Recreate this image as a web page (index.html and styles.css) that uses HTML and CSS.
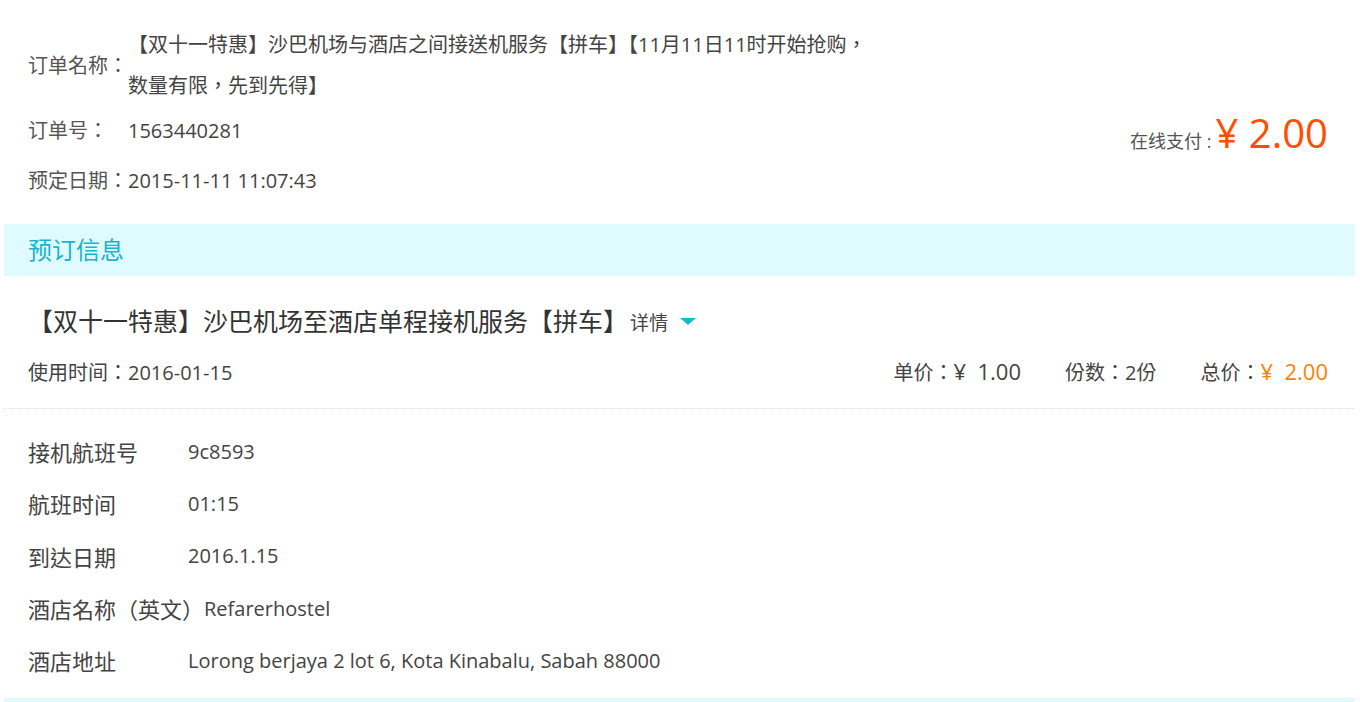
FILE: index.html
```html
<!DOCTYPE html>
<html lang="zh-TW">
<head>
    <meta charset="UTF-8">
    <meta name="viewport" content="width=device-width, initial-scale=1.0">
    <title>订单详情</title>
    <link rel="stylesheet" href="styles.css">
</head>
<body>
    <div class="order-page">
        <div class="order-info">
            <div class="order-fields">
                <div class="order-row order-name">
                    <span class="order-label">订单名称：</span>
                    <span class="order-value">【双十一特惠】沙巴机场与酒店之间接送机服务【拼车】【11月11日11时开始抢购，数量有限，先到先得】</span>
                </div>
                <div class="order-row">
                    <span class="order-label">订单号：</span>
                    <span class="order-value">1563440281</span>
                </div>
                <div class="order-row">
                    <span class="order-label">预定日期：</span>
                    <span class="order-value">2015-11-11 11:07:43</span>
                </div>
            </div>
            <div class="order-pay">
                <span class="pay-label">在线支付 :</span>
                <span class="pay-amount">¥ 2.00</span>
            </div>
        </div>

        <h2 class="section-title">预订信息</h2>

        <div class="product">
            <div class="product-head">
                <h3 class="product-name">【双十一特惠】沙巴机场至酒店单程接机服务【拼车】</h3>
                <a class="product-more" href="#">详情<span class="arrow-down"></span></a>
            </div>
            <div class="product-meta">
                <span class="use-date">使用时间：2016-01-15</span>
                <div class="product-prices">
                    <span class="price-item">单价：<span class="price-num">¥&nbsp; 1.00</span></span>
                    <span class="price-item">份数：2份</span>
                    <span class="price-item">总价：<span class="price-num price-total">¥&nbsp; 2.00</span></span>
                </div>
            </div>
        </div>

        <div class="details">
            <div class="detail-row">
                <span class="detail-label">接机航班号</span>
                <span class="detail-value">9c8593</span>
            </div>
            <div class="detail-row">
                <span class="detail-label">航班时间</span>
                <span class="detail-value">01:15</span>
            </div>
            <div class="detail-row">
                <span class="detail-label">到达日期</span>
                <span class="detail-value">2016.1.15</span>
            </div>
            <div class="detail-row">
                <span class="detail-label">酒店名称（英文）</span>
                <span class="detail-value">Refarerhostel</span>
            </div>
            <div class="detail-row">
                <span class="detail-label">酒店地址</span>
                <span class="detail-value">Lorong berjaya 2 lot 6, Kota Kinabalu, Sabah 88000</span>
            </div>
        </div>

        <div class="bottom-bar"></div>
    </div>
</body>
</html>
```

FILE: styles.css
```css
body {
    margin: 0;
    padding: 0;
    font-family: "Open Sans", "Noto Sans CJK TC", "Noto Sans CJK SC", sans-serif;
    color: #444;
    background: #fff;
}

.order-page {
    padding: 0 5px 0 4px;
}

.order-info {
    display: flex;
    justify-content: space-between;
    padding: 24px 27px 0 24px;
}

.order-row {
    display: flex;
    font-size: 20px;
    line-height: 50px;
}

.order-name {
    line-height: 41px;
}

.order-label {
    flex: none;
    width: 100px;
    color: #555;
}

.order-name .order-label {
    align-self: center;
}

.order-value {
    max-width: 748px;
    color: #444;
}

.order-pay {
    padding-top: 84px;
    line-height: 50px;
}

.pay-label {
    font-size: 18px;
    color: #555;
}

.pay-amount {
    font-size: 40px;
    color: #ff4e00;
}

.section-title {
    margin: 18px 0 0;
    height: 52px;
    line-height: 52px;
    padding-left: 24px;
    font-size: 24px;
    font-weight: normal;
    color: #18b4d0;
    background: #e0fbff;
}

.product {
    padding: 24px 27px 0 24px;
    border-bottom: 1px dotted #ddd;
}

.product-head {
    display: flex;
    align-items: center;
    height: 40px;
}

.product-name {
    margin: 0;
    font-size: 25px;
    font-weight: normal;
    color: #333;
}

.product-more {
    display: flex;
    align-items: center;
    margin-left: 2px;
    padding-top: 3px;
    font-size: 19px;
    color: #444;
    text-decoration: none;
}

.arrow-down {
    margin-left: 12px;
    width: 0;
    height: 0;
    border-left: 8px solid transparent;
    border-right: 8px solid transparent;
    border-top: 7px solid #1cb6d2;
}

.product-meta {
    display: flex;
    justify-content: space-between;
    align-items: center;
    height: 40px;
    margin-top: 11px;
    margin-bottom: 17px;
    font-size: 20px;
}

.product-prices {
    display: flex;
    align-items: baseline;
    gap: 44px;
}

.price-num {
    font-size: 22px;
}

.price-total {
    color: #ff8000;
}

.details {
    padding: 16px 24px 0;
}

.detail-row {
    display: flex;
    align-items: center;
    height: 52.3px;
}

.detail-label {
    flex: none;
    min-width: 160px;
    font-size: 22px;
    color: #444;
}

.detail-value {
    font-size: 20px;
    color: #444;
}

.bottom-bar {
    margin-top: 12px;
    height: 4px;
    background: #e0fbff;
}
```
